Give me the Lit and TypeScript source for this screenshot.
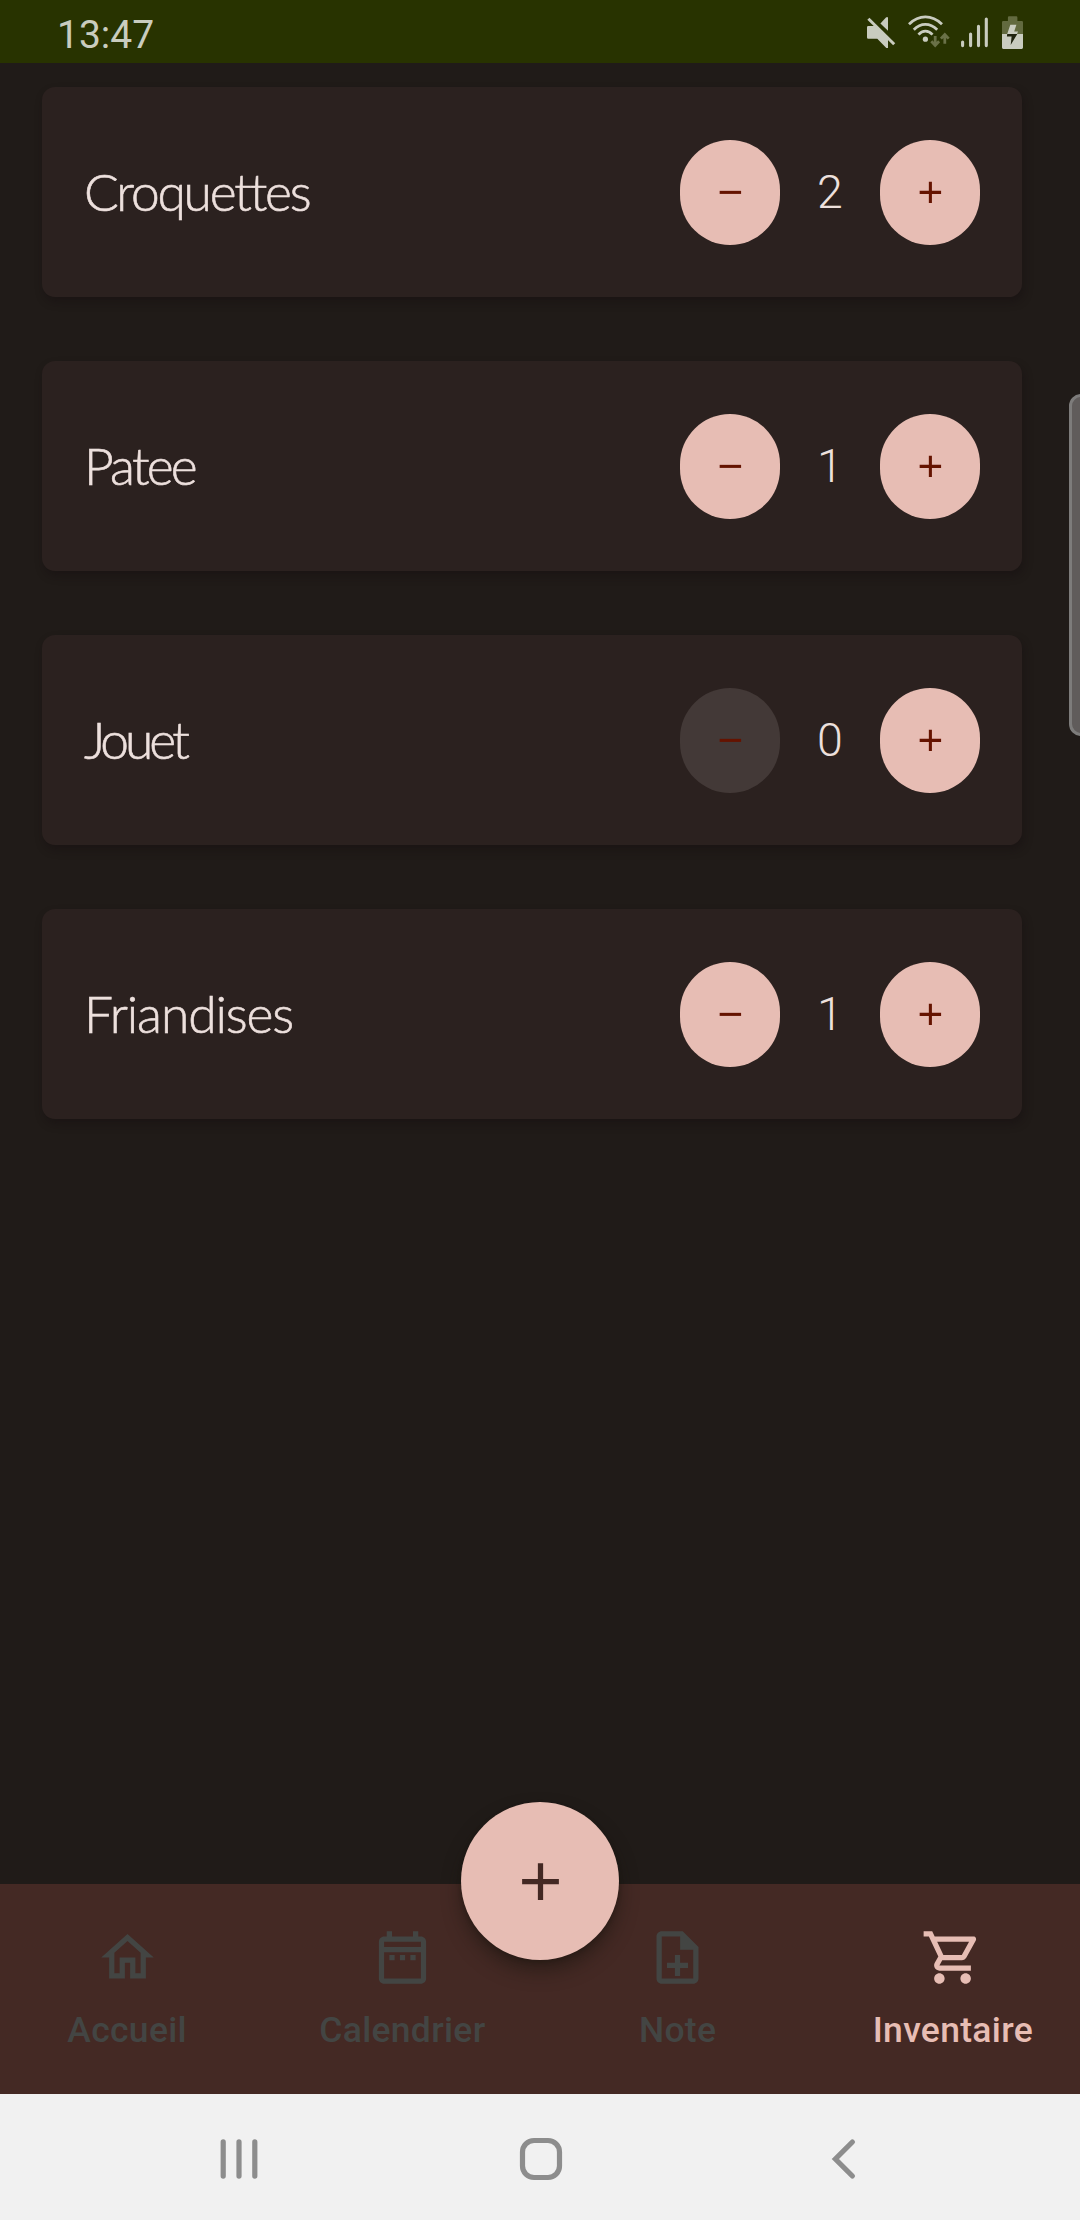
import { LitElement, html, svg, css } from "lit";
import { customElement, property } from "lit/decorators.js";
import { classMap } from "lit/directives/class-map.js";
import { styleMap } from "lit/directives/style-map.js";

const icons = {
  home: svg`<path d="M12 5.69l5 4.5V18h-2v-6H9v6H7v-7.81l5-4.5M12 3L2 12h3v8h6v-6h2v6h6v-8h3L12 3z"/>`,
  calendar: svg`<path d="M7 11h2v2H7v-2zm14-5v14c0 1.1-.9 2-2 2H5c-1.11 0-2-.9-2-2l.01-14c0-1.1.88-2 1.99-2h1V2h2v2h8V2h2v2h1c1.1 0 2 .9 2 2zM5 8h14V6H5v2zm14 12V10H5v10h14zm-4-7h2v-2h-2v2zm-4 0h2v-2h-2v2z"/>`,
  note: svg`<path d="M13 11h-2v3H8v2h3v3h2v-3h3v-2h-3zm1-9H6c-1.1 0-2 .9-2 2v16c0 1.1.89 2 1.99 2H18c1.1 0 2-.9 2-2V8l-6-6zm4 18H6V4h7v5h5v11z"/>`,
  cart: svg`<path d="M15.55 13c.75 0 1.41-.41 1.75-1.03l3.58-6.49c.37-.66-.11-1.48-.87-1.48H5.21l-.94-2H1v2h2l3.6 7.59-1.35 2.44C4.52 15.37 5.48 17 7 17h12v-2H7l1.1-2h7.45zM6.16 6h12.15l-2.76 5H8.53L6.16 6zM7 18c-1.1 0-1.99.9-1.99 2S5.9 22 7 22s2-.9 2-2-.9-2-2-2zm10 0c-1.1 0-1.99.9-1.99 2s.89 2 1.99 2 2-.9 2-2-.9-2-2-2z"/>`,
  plus: svg`<path d="M19 13h-6v6h-2v-6H5v-2h6V5h2v6h6v2z"/>`,
  minus: svg`<path d="M19 13H5v-2h14v2z"/>`,
};

type IconName = keyof typeof icons;

const icon = (name: IconName) => html`<svg class="icon" viewBox="0 0 24 24">${icons[name]}</svg>`;

@customElement("status-bar")
class StatusBar extends LitElement {
  static styles = css`
    :host {
      display: flex;
      justify-content: space-between;
      height: 63px;
      padding: 0 56px 0 57px;
      background: #283300;
      color: #c9ccbf;
      font: 400 39px/70px Roboto, sans-serif;
      box-sizing: border-box;
    }
    .tray { display: flex; }
    svg { display: block; height: 63px; }
  `;
  render() {
    return html`
      <span class="time">13:47</span>
      <div class="tray">
        <svg width="41" viewBox="25 0 41 63" fill="currentColor">
          <path d="M28.3 26H35.5L48 38.5V48H46.3L37.3 38.8H28.3Q27 38.8 27 37.5V27.3Q27 26 28.3 26Z" />
          <path d="M40.4 23.4L46.2 17.2H48V30.8Z" />
          <path d="M28.4 18.8L54.2 44.2" stroke="currentColor" stroke-width="3" />
        </svg>
        <svg width="52" viewBox="66 0 52 63" fill="none" stroke="currentColor" stroke-width="2.8">
          <path d="M69 24.2Q76.5 16.9 85.4 16.9T102 24.2M73.8 29.8Q79 24.3 85.4 24.3T97.2 29.8M78.5 34.6Q81.5 31.2 85.4 31.2T92.5 34.6" />
          <circle cx="85.4" cy="39.2" r="2.6" fill="currentColor" stroke="none" />
          <path stroke="#6a7148" d="M95.2 36V45M91.3 41.3L95.2 45.4L99.1 41.3M104.8 43.8V34.5M100.9 38.6L104.8 34.5L108.7 38.6" />
        </svg>
        <svg width="42" viewBox="118 0 42 63" stroke="currentColor" stroke-width="3.1" stroke-linecap="round">
          <path d="M122.6 42V45.6M130.6 34V45.6M138.5 26.3V45.6M146.3 19V45.6" />
        </svg>
        <svg width="24" viewBox="160 0 24 63">
          <path fill="#626a3f" d="M169 16.3H176.3Q177.4 16.3 177.4 17.4V21H181.8Q183 21 183 22.2V34H162V22.2Q162 21 163.2 21H167.9V17.4Q167.9 16.3 169 16.3Z" />
          <path fill="#c9ccbf" d="M162 34H183V47.6Q183 48.9 181.7 48.9H163.3Q162 48.9 162 47.6ZM170.3 24.7H176.4L174.2 31.6H178L177 34H167.2Z" />
          <path fill="#20240f" d="M167.2 34H177.3L170.7 45L171.6 36.6H166.9Z" />
        </svg>
      </div>
    `;
  }
}

@customElement("inventory-card")
class InventoryCard extends LitElement {
  @property() name = "";
  @property({ type: Number }) count = 0;
  @property({ type: Number }) tracking = 0;

  static styles = css`
    :host {
      display: flex;
      align-items: center;
      justify-content: space-between;
      height: 210px;
      padding: 0 42px;
      box-sizing: border-box;
      border-radius: 13px;
      background: #2b211f;
      box-shadow: 2px 5px 8px rgba(20, 12, 16, 0.4);
      color: #ede0dd;
    }
    .name {
      font: 300 51.5px/62px Lato, sans-serif;
      -webkit-text-stroke: 0.6px currentColor;
      padding-bottom: 3px;
      white-space: nowrap;
    }
    .stepper {
      display: grid;
      grid-template-columns: repeat(3, 100px);
      align-items: center;
      justify-items: center;
    }
    .button {
      display: flex;
      align-items: center;
      justify-content: center;
      width: 100px;
      height: 105px;
      padding: 1px 0 0;
      border: 0;
      box-sizing: border-box;
      border-radius: 52px;
      background: #e7bdb4;
      color: #651300;
    }
    .disabled { background: #433937; }
    .icon { width: 36.75px; height: 36.75px; fill: currentColor; }
    .count { font: 300 46.5px/60px Roboto, sans-serif; }
  `;
  render() {
    return html`
      <span class="name" style=${styleMap({ letterSpacing: `${this.tracking}px` })}>${this.name}</span>
      <div class="stepper">
        <button class=${classMap({ button: true, disabled: this.count === 0 })}>${icon("minus")}</button>
        <span class="count">${this.count}</span>
        <button class="button">${icon("plus")}</button>
      </div>
    `;
  }
}

@customElement("bottom-nav")
class BottomNav extends LitElement {
  static styles = css`
    :host {
      display: grid;
      grid-template-columns: repeat(4, 1fr);
      gap: 21px;
      height: 210px;
      position: relative;
      background: #442924;
    }
    .tab {
      display: flex;
      flex-direction: column;
      align-items: center;
      padding-top: 42px;
      gap: 20px;
      color: #434543;
      font: 500 35.5px/42px Roboto, sans-serif;
      letter-spacing: 0.3px;
      white-space: nowrap;
    }
    .active { color: #e7bdb4; }
    .icon { width: 63px; height: 63px; fill: currentColor; }
    .fab {
      position: absolute;
      left: 461px;
      top: -82px;
      width: 158px;
      height: 158px;
      padding: 0;
      border: 0;
      border-radius: 50%;
      display: flex;
      align-items: center;
      justify-content: center;
      background: #e7bdb4;
      color: #432823;
      box-shadow: 0 11px 18px rgba(24, 20, 14, 0.5), 0 2px 4px rgba(24, 20, 14, 0.3);
    }
  `;
  private tabs: { label: string; icon: IconName; active?: boolean }[] = [
    { label: "Accueil", icon: "home" },
    { label: "Calendrier", icon: "calendar" },
    { label: "Note", icon: "note" },
    { label: "Inventaire", icon: "cart", active: true },
  ];
  render() {
    return html`
      ${this.tabs.map(
        (t) => html`<div class=${classMap({ tab: true, active: !!t.active })}>${icon(t.icon)}<span>${t.label}</span></div>`
      )}
      <button class="fab">${icon("plus")}</button>
    `;
  }
}

@customElement("system-nav")
class SystemNav extends LitElement {
  static styles = css`
    :host {
      display: flex;
      align-items: center;
      justify-content: space-between;
      height: 126px;
      padding: 4px 222px 0 216px;
      box-sizing: border-box;
      background: #f1f1f1;
    }
    svg { display: block; fill: none; stroke: #8d8d8d; stroke-width: 5.2; stroke-linecap: round; }
  `;
  render() {
    return html`
      <svg width="46" height="46" viewBox="0 0 46 46"><path d="M7.2 5.9V40.1M23 5.9V40.1M38.8 5.9V40.1" /></svg>
      <svg width="46" height="46" viewBox="0 0 46 46"><rect x="4.5" y="4.5" width="37" height="37" rx="11.5" /></svg>
      <svg width="38" height="46" viewBox="-9 0 38 46"><path d="M23.4 6L6.4 23L23.4 40" /></svg>
    `;
  }
}

@customElement("app-root")
class AppRoot extends LitElement {
  static styles = css`
    :host {
      display: flex;
      flex-direction: column;
      position: relative;
      width: 1080px;
      height: 2220px;
      overflow: hidden;
      background: #201b18;
    }
    .list {
      flex: 1;
      display: flex;
      flex-direction: column;
      gap: 64px;
      padding: 24px 58px 0 42px;
    }
    .edge-handle {
      position: absolute;
      left: 1069px;
      top: 394px;
      width: 24px;
      height: 342px;
      box-sizing: border-box;
      border: 3px solid #7d7c7b;
      border-radius: 12px;
      background: #605c5b;
    }
  `;
  private items = [
    { name: "Croquettes", count: 2, tracking: -2.2 },
    { name: "Patee", count: 1, tracking: -2.8 },
    { name: "Jouet", count: 0, tracking: -4 },
    { name: "Friandises", count: 1, tracking: -1.1 },
  ];
  render() {
    return html`
      <status-bar></status-bar>
      <main class="list">
        ${this.items.map(
          (i) => html`<inventory-card .name=${i.name} .count=${i.count} .tracking=${i.tracking}></inventory-card>`
        )}
      </main>
      <bottom-nav></bottom-nav>
      <system-nav></system-nav>
      <div class="edge-handle"></div>
    `;
  }
}
